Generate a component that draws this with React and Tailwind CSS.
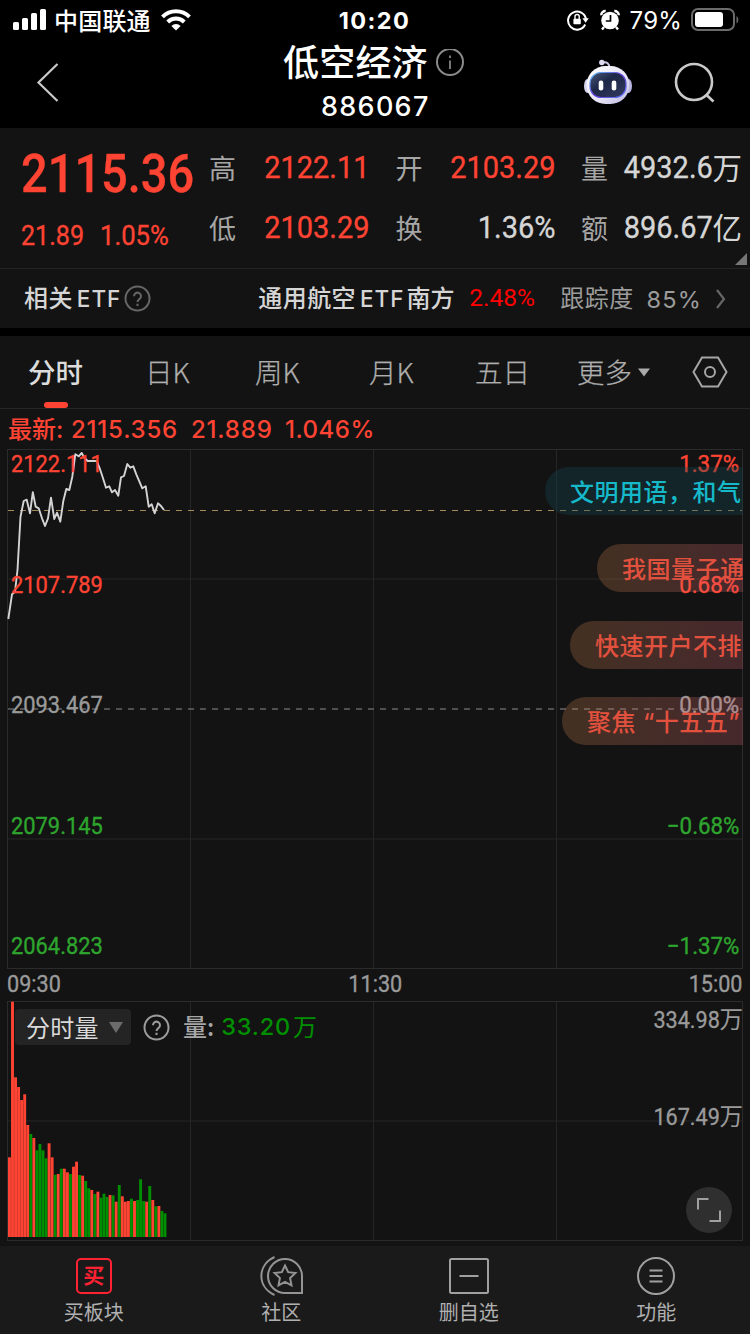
import { useState } from "react";

const RED = "#ff4433";
const GREEN = "#008f00";

const priceLine =
  "8.3,619 12,594.3 15,591.7 17.5,570 20.5,516.7 23.7,501 26.7,499.7 30,513.3 32.8,492.3 35.7,506.7 38.7,508.3 42,518.3 45,526 48,518.3 51,497.7 54.3,519 57,512.7 60.3,521.7 63.3,501 66.3,489 69.3,490 72.3,476.7 75.3,454.3 78.7,456.3 81.7,453 84.7,458.3 87.7,461 96.7,461 99.7,468.3 102.7,477.3 106,487.7 109.3,486.3 112,492.3 115,490 118.3,495.7 121,477.3 124,476 127.3,464 130.3,467.7 133.3,466.3 136.3,474.3 142.3,488.3 145.7,486.3 148.7,506.7 151.7,504.3 154.7,513.3 158,503.3 160.7,505.7 164,510";

// bar heights in px, one per minute
const volumes = [
  79.7, 235.3, 159.7, 150, 137, 142.7, 112, 103, 99, 86.7, 93, 86.7, 78.7, 93.7, 79.7, 62.3, 63, 68.3, 68.3, 64.7, 63,
  70.3, 75.3, 62, 61.3, 56, 48.7, 47, 43, 45.3, 39.3, 43.3, 40, 42, 41.7, 35.3, 52, 40.7, 35.3, 36, 38.3, 36, 37, 57.7,
  36, 35.3, 51, 37, 30.7, 31, 26, 23.7,
];
const directions = "RRRRRRRGRGGGGRRGRGRRGRRGRGGRGRGGGRGRGRRRGRGGGRGRGRGG";

const leftLabels = [
  { text: "2122.111", cls: "top-[4px] text-[#ff4433]" },
  { text: "2107.789", cls: "top-[125px] text-[#ff4433]" },
  { text: "2093.467", cls: "top-[245px] text-[#9a9a9a]" },
  { text: "2079.145", cls: "top-[366px] text-[#2ea52e]" },
  { text: "2064.823", cls: "top-[486px] text-[#2ea52e]" },
];

const rightLabels = [
  { text: "1.37%", cls: "top-[4px] text-[#ff4433]" },
  { text: "0.68%", cls: "top-[125px] text-[#ff4433]" },
  { text: "0.00%", cls: "top-[245px] text-[#9a9a9a]" },
  { text: "−0.68%", cls: "top-[366px] text-[#2ea52e]" },
  { text: "−1.37%", cls: "top-[486px] text-[#2ea52e]" },
];

const comments = [
  { text: "文明用语，和气", cls: "left-[538px] top-[18px] bg-[#13474f]/35 text-[#16b9c9]" },
  { text: "我国量子通", cls: "left-[590px] top-[95px] bg-linear-to-r from-[#d78850]/25 to-[#e16978]/25 text-[#e2503e]" },
  { text: "快速开户不排", cls: "left-[563px] top-[172px] bg-linear-to-r from-[#d78850]/25 to-[#e16978]/25 text-[#e2503e]" },
  { text: "聚焦 “十五五”", cls: "left-[555px] top-[248px] bg-linear-to-r from-[#d78850]/25 to-[#e16978]/25 text-[#e2503e]" },
];

const din =
  "inline-block font-[Roboto,'Noto_Sans_CJK_SC',sans-serif] leading-none whitespace-nowrap [-webkit-text-stroke:0.35px_currentColor]";

function StatusBar() {
  return (
    <div className="flex h-10 items-center pl-[13px] pr-[12px]">
      <svg width="34" height="22" viewBox="0 0 34 22" fill="#fff">
        <rect x="0" y="13" width="6" height="8" rx="1.5" />
        <rect x="9" y="9" width="6" height="12" rx="1.5" />
        <rect x="18" y="4" width="6" height="17" rx="1.5" />
        <rect x="27" y="0" width="6" height="21" rx="1.5" />
      </svg>
      <span className="ml-[7px] text-[24px] leading-none font-medium tracking-[0.2px]">中国联通</span>
      <svg className="ml-[10px]" width="30" height="22" viewBox="0 0 30 22" fill="none" stroke="#fff" strokeWidth="4">
        <path d="M1.5 7.8a19 19 0 0 1 27 0" />
        <path d="M6.7 13a11.8 11.8 0 0 1 16.6 0" />
        <path d="M15 21.6l-4.6-4.7a6.6 6.6 0 0 1 9.2 0z" fill="#fff" stroke="none" />
      </svg>
      <span className="ml-[148px] w-[76px] pt-[2px] font-[Inter] text-[23.5px] leading-none font-bold tracking-[1.4px]">10:20</span>
      <div className="ml-auto flex items-center">
        <svg width="22" height="22" viewBox="0 0 22 22" fill="none" stroke="#fff" strokeWidth="2">
          <path d="M18.2 15.5A9 9 0 1 1 19 10.5" />
          <path d="M15.4 9.3h6.4l-3.2 4.4z" fill="#fff" stroke="none" />
          <rect x="6.4" y="9.7" width="7.4" height="5.6" rx="1" fill="#fff" stroke="none" />
          <path d="M8 10V7.6a2.1 2.1 0 0 1 4.2 0V10" strokeWidth="1.4" />
        </svg>
        <svg className="ml-[10px]" width="22" height="22" viewBox="0 0 22 22">
          <circle cx="11" cy="11.5" r="8.8" fill="#fff" />
          <path d="M2.2 6.2A4.2 4.2 0 0 1 6.7 2M15.3 2a4.2 4.2 0 0 1 4.5 4.2M5 18l-2 2.5M17 18l2 2.5" stroke="#fff" strokeWidth="2.4" fill="none" />
          <path d="M11.5 6v6H6.8" stroke="#000" strokeWidth="1.7" fill="none" />
        </svg>
        <span className="ml-[9px] pt-[2px] font-[Inter] text-[24px] leading-none tracking-[0.2px]">79%</span>
        <svg className="ml-[9px] -mr-[1px]" width="48" height="24" viewBox="0 0 48 24">
          <rect x="1" y="1" width="42" height="21" rx="6" fill="none" stroke="#6b6b6b" strokeWidth="2" />
          <rect x="4" y="4" width="28" height="15" rx="3" fill="#fff" />
          <path d="M45.5 8c2.4 1.5 2.4 6 0 7.5z" fill="#6b6b6b" />
        </svg>
      </div>
    </div>
  );
}

function Robot() {
  return (
    <svg width="50" height="46" viewBox="0 0 50 46">
      <defs>
        <linearGradient id="shell" x1="0" y1="0" x2="1" y2="1">
          <stop offset="0" stopColor="#ffffff" />
          <stop offset="0.6" stopColor="#e6e4f5" />
          <stop offset="1" stopColor="#b9b4dd" />
        </linearGradient>
        <linearGradient id="rim" x1="0" y1="0" x2="1" y2="1">
          <stop offset="0" stopColor="#5ec8f0" />
          <stop offset="0.5" stopColor="#6a3fe0" />
          <stop offset="1" stopColor="#5a7cf5" />
        </linearGradient>
        <linearGradient id="visor" x1="0" y1="0" x2="1" y2="1">
          <stop offset="0" stopColor="#4d587a" />
          <stop offset="0.4" stopColor="#1d2747" />
          <stop offset="1" stopColor="#353b60" />
        </linearGradient>
      </defs>
      <path d="M20 3.5q6-1 6.5 5" stroke="#c9c6e6" strokeWidth="2" fill="none" />
      <circle cx="18.8" cy="3.5" r="2.7" fill="#dddaf2" />
      <ellipse cx="4.5" cy="27" rx="3.5" ry="7" fill="#d6d3ee" />
      <ellipse cx="45.5" cy="27" rx="3.5" ry="7" fill="#b7b3de" />
      <rect x="3.5" y="7" width="43" height="38" rx="19" fill="url(#shell)" />
      <rect x="7" y="13.5" width="36" height="25" rx="11" fill="url(#visor)" stroke="url(#rim)" strokeWidth="1.2" />
      <rect x="15.7" y="21.5" width="4.6" height="10" rx="2.3" fill="#fff" />
      <rect x="28.7" y="21.5" width="4.6" height="10" rx="2.3" fill="#fff" />
    </svg>
  );
}

function Header() {
  return (
    <div className="flex h-[88px] items-start">
      <svg className="mt-[22px] ml-[36px]" width="24" height="40" viewBox="0 0 24 40" fill="none" stroke="#c9c9c9" strokeWidth="2.2">
        <path d="M21.5 2L2.5 20.5l19 18.5" />
      </svg>
      <div className="ml-[222px] w-[188px]">
        <div className="flex h-[48px] items-center pl-[1px]">
          <span className="pb-[8px] text-[36px] leading-none font-medium tracking-[0.2px]">低空经济</span>
          <svg className="ml-[7px] shrink-0" width="30" height="30" viewBox="0 0 30 30" fill="none" stroke="#8a8a8a" strokeWidth="2">
            <circle cx="15" cy="13" r="13" />
            <path d="M15 11.5v8.5M15 6.5v2.5" stroke="#777" />
          </svg>
        </div>
        <div className="mt-[5px] pl-[39px] font-[Inter] text-[27px] leading-none font-medium tracking-[1.3px]">886067</div>
      </div>
      <div className="mt-[19px] ml-[113px]">
        <Robot />
      </div>
      <svg className="mt-[22px] ml-[41px]" width="42" height="42" viewBox="0 0 42 42" fill="none" stroke="#c9c9c9" strokeWidth="2.6">
        <circle cx="20" cy="20" r="18" />
        <path d="M32 32.5l7.5 7" />
      </svg>
    </div>
  );
}

function Stat({ label, value, unit, red }) {
  return (
    <div className="flex h-[60px] items-center justify-between whitespace-nowrap">
      <span className="pb-[2px] text-[27px] leading-none text-[#a6a6a6]">{label}</span>
      <span className={`flex items-center ${red ? "text-[#ff4433]" : "text-[#d6d6d6]"}`}>
        <span className={`${din} origin-right scale-x-92 text-[31.5px]`}>{value}</span>
        {unit && <span className="-mr-[1px] pb-[3px] text-[29.5px] leading-none">{unit}</span>}
      </span>
    </div>
  );
}

function Quote() {
  return (
    <div className="relative flex h-[141px] border-b border-[#242424] bg-[#131313]">
      <div className="w-[209px] shrink-0 pl-[21px] text-[#ff4433]">
        <div className="mt-[19px] h-[54px]">
          <span className={`${din} origin-left scale-x-[0.87] text-[54px] font-medium`}>2115.36</span>
        </div>
        <div className="mt-[21px] flex">
          <span className={`${din} w-[79px] origin-left scale-x-[0.88] text-[28.5px]`}>21.89</span>
          <span className={`${din} origin-left scale-x-90 text-[28.5px]`}>1.05%</span>
        </div>
      </div>
      <div className="mt-[10px] grid h-[120px] grid-cols-[161px_160px_160px] gap-x-[25.5px]">
        <Stat label="高" value="2122.11" red />
        <Stat label="开" value="2103.29" red />
        <Stat label="量" value="4932.6" unit="万" />
        <Stat label="低" value="2103.29" red />
        <Stat label="换" value="1.36%" />
        <Stat label="额" value="896.67" unit="亿" />
      </div>
      <svg className="absolute right-[3px] bottom-[3px]" width="12" height="12" viewBox="0 0 12 12">
        <path d="M12 0v12H0z" fill="#777" />
      </svg>
    </div>
  );
}

function QuestionIcon({ color, className }) {
  return (
    <svg className={className} width="27" height="27" viewBox="0 0 27 27" fill="none" stroke={color} strokeWidth="2">
      <circle cx="13.5" cy="13.5" r="12" />
      <path d="M10 11.2a3.5 3.5 0 1 1 5.4 2.9c-1.4.9-1.9 1.5-1.9 3M13.5 18.8v2.2" />
    </svg>
  );
}

function EtfRow() {
  return (
    <div className="flex h-[59px] items-center bg-[#131313] pl-[24px] text-[24px] leading-none whitespace-nowrap text-[#d6d6d6]">
      <span className="pb-[3px] font-medium tracking-[0.4px]">相关</span>
      <span className="ml-[4px] pt-[1px] font-[Inter] text-[22.5px] font-medium tracking-[1px]">ETF</span>
      <QuestionIcon color="#666" className="ml-[3px]" />
      <div className="ml-[107px] flex w-[211px] items-center font-medium">
        <span className="pb-[3px] tracking-[0.4px]">通用航空</span>
        <span className="ml-[4px] pt-[1px] font-[Inter] text-[22.5px] tracking-[1px]">ETF</span>
        <span className="ml-[2px] pb-[3px]">南方</span>
      </div>
      <span className="w-[91px] font-[Roboto] text-[24.5px] text-[#ff0000]">2.48%</span>
      <span className="pb-[3px] tracking-[0.4px] text-[#9c9c9c]">跟踪度</span>
      <span className="ml-[13px] pt-[2px] font-[Inter] text-[23.5px] tracking-[1.2px] text-[#9c9c9c]">85%</span>
      <svg className="ml-[13px]" width="12" height="22" viewBox="0 0 12 22" fill="none" stroke="#666" strokeWidth="2.2">
        <path d="M2 2l7 9-7 9" />
      </svg>
    </div>
  );
}

function Tabs({ active, onChange }) {
  const tabs = [
    { name: "分时", cls: "ml-[28px] w-[117px]" },
    { name: "日K", cls: "w-[110px]" },
    { name: "周K", cls: "w-[114px]" },
    { name: "月K", cls: "w-[106px]" },
    { name: "五日", cls: "w-[102px]" },
    { name: "更多", cls: "w-[61px]" },
  ];
  return (
    <div className="mt-[8px] flex h-[73px] items-center border-b border-[#262626] bg-[#131313]">
      {tabs.map((t) => (
        <button
          key={t.name}
          onClick={() => onChange(t.name)}
          className={`relative h-full shrink-0 pb-[1px] text-left text-[27.5px] leading-none ${t.cls} ${
            active === t.name
              ? "font-medium text-[#dcdcdc]"
              : "font-light text-[#aeaeae] [-webkit-text-stroke:0.25px_currentColor]"
          }`}
        >
          {t.name}
          {active === t.name && <span className="absolute bottom-0 left-[16px] h-[6px] w-[24px] rounded-full bg-[#ff4433]" />}
        </button>
      ))}
      <svg width="12" height="9" viewBox="0 0 12 9">
        <path d="M0 0.5h12L6 8.5z" fill="#aaa" />
      </svg>
      <svg className="ml-[42px] shrink-0" width="36" height="32" viewBox="0 0 36 32" fill="none" stroke="#a6a6a6" strokeWidth="2">
        <path d="M10 1.5h16L34.5 16 26 30.5H10L1.5 16z" />
        <circle cx="18" cy="16" r="5" />
      </svg>
    </div>
  );
}

function PriceChart() {
  return (
    <div className="relative mx-[7px] h-[520px] overflow-hidden">
      <svg className="block" width="736" height="520" viewBox="7 449 736 520" fill="none">
        <g stroke="#2b2b2b">
          <rect x="7.5" y="449.5" width="735" height="519" />
          <path d="M190.5 450v518M373.5 450v518M556.5 450v518M8 579h734M8 839h734" stroke="#262626" />
        </g>
        <path d="M8 709h734" stroke="#666" strokeWidth="1.6" strokeDasharray="6 6" />
        <path d="M8 510.5h734" stroke="#a58a5c" strokeWidth="1.2" strokeDasharray="6 6" />
        <polyline points={priceLine} stroke="#d4d4d4" strokeWidth="1.9" strokeLinejoin="round" />
      </svg>
      {leftLabels.map((l) => (
        <span key={l.text} className={`${din} absolute left-[4px] origin-left scale-x-93 text-[23.5px] ${l.cls}`}>
          {l.text}
        </span>
      ))}
      {rightLabels.map((l) => (
        <span key={l.text} className={`${din} absolute right-[4px] origin-right scale-x-95 text-[23.5px] ${l.cls}`}>
          {l.text}
        </span>
      ))}
      {comments.map((c) => (
        <div
          key={c.text}
          className={`absolute right-0 flex h-[48px] items-center overflow-hidden rounded-l-full pt-[3px] pl-[25px] font-[Inter,'Noto_Sans_CJK_SC',sans-serif] text-[24px] leading-none font-medium tracking-[0.5px] whitespace-nowrap ${c.cls}`}
        >
          {c.text}
        </div>
      ))}
    </div>
  );
}

function VolumeChart() {
  return (
    <div className="relative mx-[7px] h-[240px]">
      <svg className="block" width="736" height="240" viewBox="7 1001 736 240" fill="none">
        <rect x="7.5" y="1001.5" width="735" height="239" stroke="#2b2b2b" />
        <path d="M190.5 1002v238M373.5 1002v238M556.5 1002v238M8 1121h734" stroke="#262626" />
        {volumes.map((h, i) => (
          <rect key={i} x={8 + i * 3.05} y={1237 - h} width="2.9" height={h} fill={directions[i] === "R" ? RED : GREEN} />
        ))}
      </svg>
      <div className="absolute top-[8px] left-[8px] flex items-center text-[24px] leading-none whitespace-nowrap">
        <div className="flex h-[36px] w-[116px] items-center rounded-[4px] bg-[#242424] pl-[11px] text-[#dadada]">
          <span className="pb-[1px] tracking-[0.3px]">分时量</span>
          <svg className="ml-[10px]" width="14" height="11" viewBox="0 0 14 11">
            <path d="M0 0h14L7 11z" fill="#6b6b6b" />
          </svg>
        </div>
        <QuestionIcon color="#9c9c9c" className="ml-[12px]" />
        <span className="ml-[13px] pb-[3px] font-medium text-[#a6a6a6]">量:</span>
        <span className="ml-[7px] font-[Inter] text-[23.5px] font-medium tracking-[0.8px] text-[#008f00]">33.20</span>
        <span className="ml-[2px] pb-[2px] text-[#008f00]">万</span>
      </div>
      <div className="absolute top-[6px] right-0 flex items-center text-[#9a9a9a]">
        <span className={`${din} origin-right scale-x-90 text-[24px]`}>334.98</span>
        <span className="pb-[2px] text-[23.5px] leading-none">万</span>
      </div>
      <div className="absolute top-[103px] right-0 flex items-center text-[#9a9a9a]">
        <span className={`${din} origin-right scale-x-90 text-[24px]`}>167.49</span>
        <span className="pb-[2px] text-[23.5px] leading-none">万</span>
      </div>
      <button className="absolute top-[186px] right-[11px] flex size-[46px] items-center justify-center rounded-full bg-[#2f2f2f]">
        <svg width="24" height="24" viewBox="0 0 24 24" fill="none" stroke="#a0a0a0" strokeWidth="2">
          <path d="M1 11.5V1h10.5M12.5 23H23V12.5" />
        </svg>
      </button>
    </div>
  );
}

function BottomNav() {
  return (
    <div className="mt-[5px] grid h-[88px] grid-cols-4 bg-[#1a1a1a] text-[20px] leading-none text-[#b0b0b0]">
      <div className="flex flex-col items-center pt-[12px]">
        <div className="flex size-[36px] items-center justify-center rounded-[5px] border-2 border-[#ff2233] pb-[3px] text-[21px] font-bold text-[#ff2233]">
          买
        </div>
        <span className="mt-[8px]">买板块</span>
      </div>
      <div className="flex flex-col items-center pt-[10px]">
        <svg className="ml-[2px]" width="44" height="40" viewBox="0 0 44 40" fill="none" stroke="#949494" strokeWidth="2">
          <path d="M14.5 1C-3 9-3 31 14.5 39" />
          <path d="M42 37V20a17 17 0 1 0-17 17z" />
          <path d="M25 9.5l3.2 6.7 7.2.9-5.3 5 1.4 7.2-6.5-3.5-6.5 3.5 1.4-7.2-5.3-5 7.2-.9z" />
        </svg>
        <span className="mt-[6px]">社区</span>
      </div>
      <div className="flex flex-col items-center pt-[12px]">
        <svg width="40" height="36" viewBox="0 0 40 36" fill="none" stroke="#a0a0a0" strokeWidth="2">
          <rect x="1" y="1" width="38" height="34" rx="1.5" />
          <path d="M10.5 18h19" />
        </svg>
        <span className="mt-[8px]">删自选</span>
      </div>
      <div className="flex flex-col items-center pt-[11px]">
        <svg width="38" height="38" viewBox="0 0 38 38" fill="none" stroke="#a0a0a0" strokeWidth="2">
          <circle cx="19" cy="19" r="18" />
          <path d="M12.5 13.5h13M12.5 19h13M12.5 24.5h13" />
        </svg>
        <span className="mt-[7px]">功能</span>
      </div>
    </div>
  );
}

function App() {
  const [tab, setTab] = useState("分时");

  return (
    <div className="h-[1334px] w-[750px] overflow-hidden bg-black font-['Noto_Sans_CJK_SC',sans-serif] text-white">
      <StatusBar />
      <Header />
      <Quote />
      <EtfRow />
      <Tabs active={tab} onChange={setTab} />
      <div className="bg-[#131313]">
        <div className="flex h-[40px] items-center pt-[2px] pl-[8px] font-[Inter,'Noto_Sans_CJK_SC',sans-serif] text-[24px] leading-none font-medium tracking-[0.8px] whitespace-nowrap text-[#ff4433]">
          <span className="w-[63px] tracking-normal">最新:</span>
          <span className="w-[120px]">2115.356</span>
          <span className="w-[94px]">21.889</span>
          <span className="tracking-[0.5px]">1.046%</span>
        </div>
        <PriceChart />
        <div className="flex h-[32px] items-center justify-between px-[7px] text-[#9a9a9a]">
          <span className={`${din} origin-left scale-x-92 text-[23.5px]`}>09:30</span>
          <span className={`${din} scale-x-92 text-[23.5px]`}>11:30</span>
          <span className={`${din} origin-right scale-x-92 text-[23.5px]`}>15:00</span>
        </div>
        <VolumeChart />
        <BottomNav />
      </div>
    </div>
  );
}

export default App;
